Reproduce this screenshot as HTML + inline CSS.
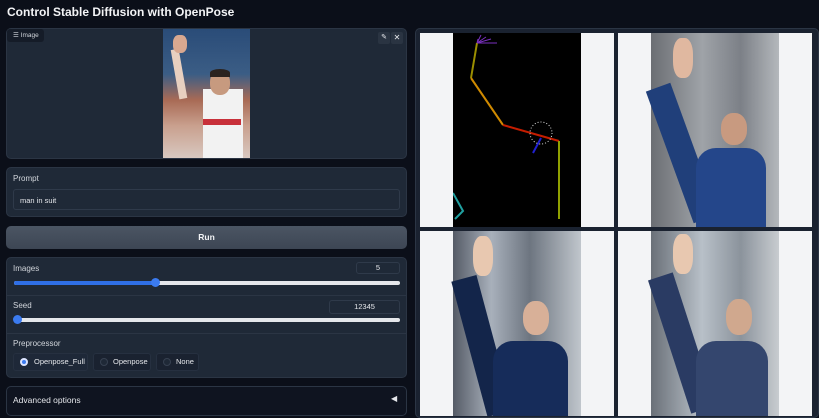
<!DOCTYPE html>
<html><head><style>
*{box-sizing:border-box;margin:0;padding:0}
body{width:819px;height:410px;overflow:hidden;background:#0b0f19;font-family:"Liberation Sans",sans-serif;color:#e5e7eb;position:relative}
.abs{position:absolute}
.blk{position:absolute;background:#1f2937;border:1px solid #2b3544;border-radius:5px}
.lbl{font-size:8px;color:#d1d5db}
.inp{position:absolute;background:#1f2937;border:1px solid #2f3a4a;border-radius:3px;font-size:8px;color:#e5e7eb}
.track{position:absolute;height:4px;border-radius:2px;background:#e5e7eb}
.radio{position:absolute;top:353px;height:18px;background:#1a2230;border:1px solid #263040;border-radius:3px;font-size:7.5px;line-height:16px;color:#e5e7eb;white-space:nowrap}
.dot{position:absolute;left:6px;top:4px;width:8px;height:8px;border-radius:50%;background:#1f2937;border:1px solid #374151}
.tile{position:absolute;background:#f3f4f6;overflow:hidden}
.img{position:absolute;top:0;bottom:0}
</style></head><body>
<div class="abs" style="left:7px;top:5px;font-size:12px;font-weight:bold;color:#f3f4f6">Control Stable Diffusion with OpenPose</div>

<div class="blk" style="left:6px;top:28px;width:401px;height:131px;"></div>
<div class="abs" style="left:7px;top:29px;width:37px;height:13px;background:#151c28;border-radius:3px;font-size:6.5px;line-height:13px;color:#d1d5db;padding-left:6px">☰ Image</div>
<div class="abs" style="left:378px;top:32px;width:12px;height:12px;background:#2a3442;border-radius:2px;font-size:7px;text-align:center;line-height:12px">✎</div>
<div class="abs" style="left:391px;top:32px;width:12px;height:12px;background:#2a3442;border-radius:2px;font-size:8px;text-align:center;line-height:12px">✕</div>
<div class="abs" style="left:163px;top:29px;width:87px;height:129px;background:linear-gradient(180deg,#2a4c78 0%,#3b5d85 35%,#a86a55 55%,#c9a08e 75%,#d8c8c0 100%);overflow:hidden">
 <div class="abs" style="left:40px;top:60px;width:40px;height:70px;background:#f2f2f2"></div>
 <div class="abs" style="left:47px;top:42px;width:20px;height:24px;border-radius:45%;background:#c79a7f"></div>
 <div class="abs" style="left:47px;top:40px;width:20px;height:8px;border-radius:50% 50% 0 0;background:#2a2320"></div>
 <div class="abs" style="left:12px;top:20px;width:8px;height:50px;background:#e8d0c0;transform:rotate(-10deg)"></div>
 <div class="abs" style="left:10px;top:6px;width:14px;height:18px;border-radius:40%;background:#d8a890"></div>
 <div class="abs" style="left:40px;top:90px;width:38px;height:6px;background:#c8303a"></div>
</div>

<div class="blk" style="left:6px;top:167px;width:401px;height:50px;"></div>
<div class="abs lbl" style="left:13px;top:174px">Prompt</div>
<div class="inp" style="left:13px;top:189px;width:387px;height:21px;padding:6px 6px;font-size:7.5px">man in suit</div>

<div class="abs" style="left:6px;top:226px;width:401px;height:23px;background:linear-gradient(#4b5563,#3d4654);border-radius:5px;font-size:8.5px;font-weight:bold;text-align:center;line-height:23px;color:#f3f4f6">Run</div>

<div class="blk" style="left:6px;top:257px;width:401px;height:121px;"></div>
<div class="abs" style="left:7px;top:295px;width:399px;height:1px;background:#2b3544"></div>
<div class="abs" style="left:7px;top:333px;width:399px;height:1px;background:#2b3544"></div>
<div class="abs lbl" style="left:13px;top:264px">Images</div>
<div class="inp" style="left:356px;top:262px;width:44px;height:12px;text-align:center;line-height:10px;font-size:7.5px">5</div>
<div class="track" style="left:14px;top:281px;width:386px"></div>
<div class="track" style="left:14px;top:281px;width:141px;background:#2f6fe6"></div>
<div class="abs" style="left:151px;top:278px;width:9px;height:9px;border-radius:50%;background:#3b7bf0"></div>
<div class="abs lbl" style="left:13px;top:301px">Seed</div>
<div class="inp" style="left:329px;top:300px;width:71px;height:14px;text-align:center;line-height:12px;font-size:7.5px">12345</div>
<div class="track" style="left:14px;top:318px;width:386px"></div>
<div class="abs" style="left:13px;top:315px;width:9px;height:9px;border-radius:50%;background:#3b7bf0"></div>
<div class="abs lbl" style="left:13px;top:339px">Preprocessor</div>
<div class="radio" style="left:13px;width:75px;background:#1e2838"><span class="dot" style="background:#3b7bf0;border:2px solid #dbe4ff"></span><span style="padding-left:20px">Openpose_Full</span></div>
<div class="radio" style="left:93px;width:58px"><span class="dot"></span><span style="padding-left:19px">Openpose</span></div>
<div class="radio" style="left:156px;width:43px"><span class="dot"></span><span style="padding-left:19px">None</span></div>

<div class="abs" style="left:6px;top:386px;width:401px;height:30px;background:#0f1420;border:1px solid #2b3544;border-radius:5px"></div>
<div class="abs" style="left:13px;top:395px;font-size:8.5px;color:#e5e7eb">Advanced options</div>
<div class="abs" style="left:391px;top:394px;font-size:8px;color:#e5e7eb">◀</div>

<div class="blk" style="left:415px;top:28px;width:404px;height:390px;background:#1a2230"></div>
<div class="tile" style="left:420px;top:33px;width:194px;height:194px">
 <div class="img" style="left:33px;width:128px;background:#000">
  <svg width="128" height="194" viewBox="0 0 128 194"><g fill="none" stroke-width="2">
  <path d="M18 45 L24 10" stroke="#9b8f00"/><path d="M18 45 L50 92" stroke="#d08a00"/><path d="M50 92 L106 108" stroke="#c51d00"/><path d="M106 108 L106 186" stroke="#8fa000"/><path d="M80 120 L88 105" stroke="#2020d0"/>
  <path d="M24 10 L28 2 M24 10 L33 4 M24 10 L38 6 M24 10 L44 10 M24 10 L25 6" stroke="#7a30c0" stroke-width="1"/>
  <circle cx="88" cy="100" r="11" stroke="#ddd" stroke-width="1" stroke-dasharray="1 2"/>
  <path d="M0 160 L10 178 L2 186" stroke="#20a0a0"/></g></svg>
 </div>
</div>
<div class="tile" style="left:618px;top:33px;width:194px;height:194px">
 <div class="img" style="left:33px;width:128px;background:linear-gradient(90deg,#6b6e73,#9fa3a8 40%,#7c8087 70%,#b4b8bc)">
  <div class="abs" style="left:18px;top:50px;width:26px;height:140px;background:#203f7a;transform:rotate(-20deg)"></div>
  <div class="abs" style="left:45px;top:115px;width:70px;height:80px;background:#24468a;border-radius:20px 20px 0 0"></div>
  <div class="abs" style="left:70px;top:80px;width:26px;height:32px;border-radius:45%;background:#c89a80"></div>
  <div class="abs" style="left:22px;top:5px;width:20px;height:40px;border-radius:40%;background:#e0b8a0"></div>
 </div>
</div>
<div class="tile" style="left:420px;top:231px;width:194px;height:185px">
 <div class="img" style="left:33px;width:128px;background:linear-gradient(90deg,#555b66,#a8b0bb 30%,#6d7580 60%,#c0c6cc)">
  <div class="abs" style="left:16px;top:45px;width:26px;height:140px;background:#13254a;transform:rotate(-15deg)"></div>
  <div class="abs" style="left:40px;top:110px;width:75px;height:80px;background:#162c5a;border-radius:20px 20px 0 0"></div>
  <div class="abs" style="left:70px;top:70px;width:26px;height:34px;border-radius:45%;background:#d8b098"></div>
  <div class="abs" style="left:20px;top:5px;width:20px;height:40px;border-radius:40%;background:#e8c8b0"></div>
 </div>
</div>
<div class="tile" style="left:618px;top:231px;width:194px;height:185px">
 <div class="img" style="left:33px;width:128px;background:linear-gradient(90deg,#6a7078,#b8c0c8 40%,#8b939c 70%,#c8ccd0)">
  <div class="abs" style="left:18px;top:42px;width:26px;height:140px;background:#2a3b63;transform:rotate(-18deg)"></div>
  <div class="abs" style="left:45px;top:110px;width:72px;height:80px;background:#34466e;border-radius:20px 20px 0 0"></div>
  <div class="abs" style="left:75px;top:68px;width:26px;height:36px;border-radius:45%;background:#d0a88e"></div>
  <div class="abs" style="left:22px;top:3px;width:20px;height:40px;border-radius:40%;background:#e8c8b0"></div>
 </div>
</div>
</body></html>
